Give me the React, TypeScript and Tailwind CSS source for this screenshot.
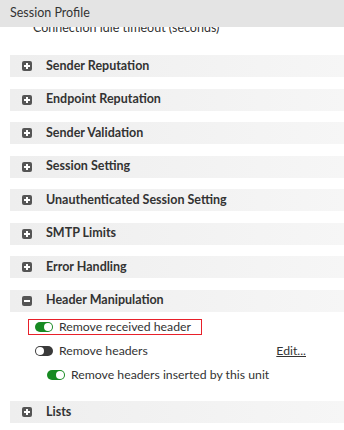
const sections = [
  "Sender Reputation",
  "Endpoint Reputation",
  "Sender Validation",
  "Session Setting",
  "Unauthenticated Session Setting",
  "SMTP Limits",
  "Error Handling",
];

const ExpandIcon = ({ open }: { open?: boolean }) => (
  <span className="relative flex size-[10px] shrink-0 items-center justify-center rounded-[2px] bg-[#555]">
    <span className="absolute h-[2px] w-[6px] bg-white" />
    {!open && <span className="absolute h-[6px] w-[2px] bg-white" />}
  </span>
);

const SectionBar = ({ title, open }: { title: string; open?: boolean }) => (
  <div className="ml-[10px] flex h-[22px] items-center gap-[14px] bg-gradient-to-r from-[#eeeeee] to-[#f6f6f6] pl-[12px]">
    <ExpandIcon open={open} />
    <span className="text-[12.5px] font-bold text-[#333]">{title}</span>
  </div>
);

const Toggle = ({ on }: { on?: boolean }) => (
  <span
    className={
      on
        ? "flex h-[10px] w-[18px] shrink-0 items-center justify-end rounded-full bg-[#178a22] px-[1px]"
        : "flex h-[10px] w-[18px] shrink-0 items-center justify-start rounded-full bg-[#3a3a3a] px-[1px]"
    }
  >
    <span className="size-[8px] rounded-full bg-white" />
  </span>
);

export default function App() {
  return (
    <div className="h-[430px] w-[344px] overflow-hidden bg-white font-['Lato','Noto_Sans',sans-serif] text-[#333]">
      <div className="flex h-[27px] items-center bg-[#e4e4e4] pl-[10px] text-[12.5px] text-[#333]">
        Session Profile
      </div>
      <div className="h-[9px] overflow-hidden pl-[33px]">
        <div className="-mt-[7px] text-[12.5px] leading-[16px]">Connection idle timeout (seconds)</div>
      </div>
      <div className="mt-[19px] flex flex-col gap-[11.5px]">
        {sections.map((s) => (
          <SectionBar key={s} title={s} />
        ))}
        <div>
          <SectionBar title="Header Manipulation" open />
          <div className="flex flex-col pt-[7.5px] text-[12.25px] leading-[16px]">
            <div className="flex h-[24px] items-start pl-[28px]">
              <div className="flex h-[16px] items-center gap-[6px] border border-[#e8202a] pr-[10px] pl-[6px]">
                <Toggle on />
                <span>Remove received header</span>
              </div>
            </div>
            <div className="flex h-[24px] items-start pl-[35px]">
              <div className="flex h-[16px] items-center gap-[6px]">
                <Toggle />
                <span>Remove headers</span>
              </div>
              <span className="ml-auto mr-[38px] underline">Edit...</span>
            </div>
            <div className="flex h-[22.5px] items-start pl-[47px]">
              <div className="flex h-[16px] items-center gap-[6px]">
                <Toggle on />
                <span>Remove headers inserted by this unit</span>
              </div>
            </div>
          </div>
        </div>
        <SectionBar title="Lists" />
      </div>
    </div>
  );
}
